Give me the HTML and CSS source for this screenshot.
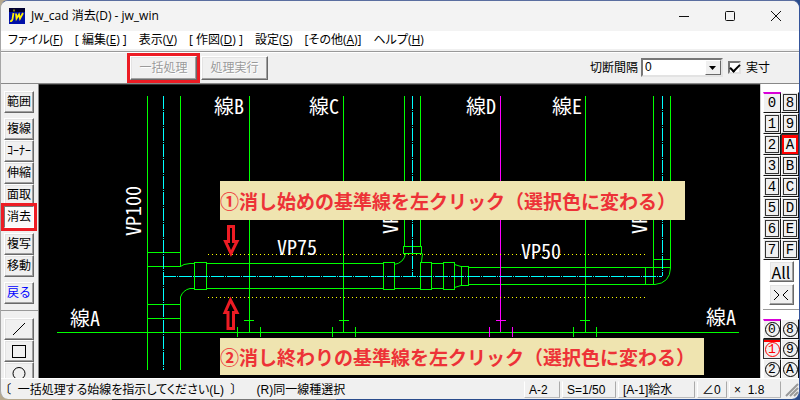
FILE: index.html
```html
<!DOCTYPE html>
<html lang="ja">
<head>
<meta charset="utf-8">
<title>Jw_cad 消去(D) - jw_win</title>
<link rel="stylesheet" href="styles.css">
</head>
<body>
<div class="window">
  <header class="titlebar">
    <svg class="app-icon" viewBox="0 0 16 16" aria-hidden="true">
      <rect width="16" height="16" fill="#0010a8"/>
      <rect width="16" height="4" fill="#000030"/>
      <path d="M4.500 2.500h1M4.500 5L3.500 11Q3 13.500 1 13M7 5.500L7.500 10.500L10 6.500L11 10.500L14 5" fill="none" stroke="#fff200" stroke-width="1.800"/>
    </svg>
    <h1>Jw_cad 消去(D) - jw_win</h1>
    <div class="window-controls">
      <button aria-label="最小化"><svg viewBox="0 0 12 12"><path d="M1 6.500h10"/></svg></button>
      <button aria-label="最大化"><svg viewBox="0 0 12 12"><rect x="1.500" y="1.500" width="9" height="9" rx="1"/></svg></button>
      <button aria-label="閉じる"><svg viewBox="0 0 12 12"><path d="M1 1l10 10M11 1L1 11"/></svg></button>
    </div>
  </header>

  <nav class="menu">
    <a href="#">ファイル(<u>F</u>)</a>
    <a href="#">[ 編集(<u>E</u>) ]</a>
    <a href="#">表示(<u>V</u>)</a>
    <a href="#">[ 作図(<u>D</u>) ]</a>
    <a href="#">設定(<u>S</u>)</a>
    <a href="#">[その他(<u>A</u>)]</a>
    <a href="#">ヘルプ(<u>H</u>)</a>
  </nav>

  <div class="control-bar">
    <button class="raised command marked" disabled>一括処理</button>
    <button class="raised command" disabled>処理実行</button>
    <div class="options">
      <label for="interval">切断間隔</label>
      <div class="combo">
        <select id="interval"><option>0</option></select>
        <span class="combo-arrow"><svg viewBox="0 0 7 4"><path d="M0 0h7L3.500 4z"/></svg></span>
      </div>
      <input type="checkbox" id="actual" checked>
      <label for="actual">実寸</label>
    </div>
  </div>

  <main class="workspace">
    <aside class="tools">
      <div class="tool-group"><button class="raised">範囲</button></div>
      <div class="tool-group">
        <button class="raised">複線</button>
        <button class="raised">ｺｰﾅｰ</button>
        <button class="raised">伸縮</button>
        <button class="raised">面取</button>
        <button class="raised pressed marked">消去</button>
      </div>
      <div class="tool-group">
        <button class="raised">複写</button>
        <button class="raised">移動</button>
      </div>
      <div class="tool-group"><button class="raised undo">戻る</button></div>
      <div class="tool-group shapes">
        <button class="raised" aria-label="線"><svg viewBox="0 0 16 14"><path d="M2 13L14 1"/></svg></button>
        <button class="raised" aria-label="矩形"><svg viewBox="0 0 16 14"><rect x="1.500" y="1.500" width="13" height="12"/></svg></button>
        <button class="raised" aria-label="円弧"><svg viewBox="0 0 16 14"><circle cx="8" cy="7.500" r="6"/></svg></button>
      </div>
    </aside>

    <section class="canvas">
      <svg class="drawing" viewBox="39 85 721 293" preserveAspectRatio="xMinYMin slice">
        <g class="solid">
          <path d="M147.500 96V370M180.500 96V266.500M180.500 297V370M147.500 252.500H180M147.500 266.500H180M147.500 304.500H180M147.500 318.500H180"/>
          <path d="M57 332.500H739"/>
          <path class="curve" d="M180.500 266.500L184 264.500L190 263.500H194M180.500 297Q183 290 190 288.500H194"/>
          <path d="M194.500 262.500h12v27h-12zM206 263.500H383M206 288.500H383M383.500 262.500h11v27h-11zM394 288.500H420"/>
          <path class="curve" d="M394 264.500Q404 263 405.500 253.500M422.500 253.500L421.500 262"/>
          <path d="M403.500 246.500h18v7h-18zM404.500 96V246M420.500 96V246"/>
          <path d="M420.500 262.500h11v27h-11zM431 263.500H443M431 288.500H443M443.500 262.500h11v27h-11zM461.500 266.500h7v19h-7z"/>
          <path class="curve" d="M454.500 264.500L461 266.500M454.500 287.500L461 285.500"/>
          <path d="M468 267.500H670M468 284.500H655M645.500 267V284M653.500 96V284M670.500 96V268M653.500 259.500H670"/>
          <path class="curve" d="M655 284.500Q670 283 670.500 268"/>
          <path d="M249.500 96V332M244 320.500h10M237.500 327v10M260.500 327v10"/>
          <path d="M343.500 96V332M339 320.500h10M332.500 327v10M355.500 327v10"/>
          <path d="M585.500 96V332M580 320.500h10M573.500 327v10M596.500 327v10"/>
        </g>
        <path class="selected" d="M500.500 96V332M496 320.500h10M489.500 327v10M512.500 327v10"/>
        <path class="center" d="M163.500 96V370M412.500 96V276M662.500 96V276M163 276.500H662"/>
        <path class="dotted" d="M208 254.500H645M208 297.500H647"/>
        <g class="cad-text">
          <text x="214" y="114">線B</text>
          <text x="309" y="114">線C</text>
          <text x="466" y="114">線D</text>
          <text x="552" y="114">線E</text>
          <text x="70" y="326">線A</text>
          <text x="706" y="325">線A</text>
          <text x="277" y="255">VP75</text>
          <text x="521" y="259">VP50</text>
          <text transform="translate(141 236) rotate(-90)">VP100</text>
          <text transform="translate(398 234) rotate(-90)">VP75</text>
          <text transform="translate(647 234) rotate(-90)">VP50</text>
        </g>
        <g class="arrows">
          <path d="M228.500 226.500h5v15h3.500L231 253.500L225.500 241.500h3z"/>
          <path d="M228 328.500h5.500v-16h3.500L230.500 300L225 312.500h3z"/>
        </g>
      </svg>
      <p class="note note-start">①消し始めの基準線を左クリック（選択色に変わる）</p>
      <p class="note note-end">②消し終わりの基準線を左クリック（選択色に変わる）</p>
    </section>

    <aside class="layers">
      <div class="layer-grid">
        <button class="used">0</button><button>8</button>
        <button>1</button><button>9</button>
        <button>2</button><button class="current">A</button>
        <button>3</button><button>B</button>
        <button>4</button><button>C</button>
        <button>5</button><button>D</button>
        <button>6</button><button>E</button>
        <button>7</button><button>F</button>
      </div>
      <div class="layer-actions">
        <button class="raised all">All</button>
        <button class="raised" aria-label="×"><svg viewBox="0 0 16 12"><path d="M1 1l5 5l-5 5M15 1l-5 5l5 5"/></svg></button>
      </div>
      <div class="layer-grid groups">
        <button class="used"><span>0</span></button><button><span>8</span></button>
        <button class="current"><span>1</span></button><button><span>9</span></button>
        <button><span>2</span></button><button><span>A</span></button>
      </div>
    </aside>
  </main>

  <footer class="status">
    <p>〔&nbsp; 一括処理する始線を指示してください(L)&nbsp; 〕&nbsp; &nbsp; &nbsp; (R)同一線種選択</p>
    <button class="cell paper">A-2</button>
    <button class="cell scale">S=1/50</button>
    <button class="cell layer">[A-1]給水</button>
    <button class="cell angle">∠0</button>
    <button class="cell zoom">×&nbsp; 1.8</button>
    <svg class="grip" viewBox="0 0 14 14" aria-hidden="true"><path d="M1 13L13 1M5 13L13 5M9 13L13 9"/></svg>
  </footer>
</div>
</body>
</html>
```

FILE: styles.css
```css
* { box-sizing: border-box; }

body {
  margin: 0;
  height: 100vh;
  overflow: hidden;
  background: linear-gradient(90deg, #b5a78c 14%, #2c2c2c 14% 25%, #777 25% 42%, #2a4c8c 42%);
  color: #000;
  font: 12px/16px "Liberation Sans", "Noto Sans CJK JP", sans-serif;
}

button, select, input { font: inherit; color: inherit; margin: 0; }
button { padding: 0; border: 0; background: none; }
p, h1 { margin: 0; }
svg { display: block; }

.window {
  display: flex;
  flex-direction: column;
  height: calc(100vh - 1px);
  border: 1px solid #a6a6a6;
  border-top-color: #5a6ea0;
  border-right-color: #34549a;
  border-bottom: 0;
  border-radius: 8px;
  background: #f0f0f0;
  overflow: hidden;
}

.titlebar {
  display: flex;
  align-items: center;
  flex: none;
  height: 30px;
  padding-left: 8px;
  gap: 6px;
  background: #f3f3f3;
}
.titlebar h1 { font: 12px/16px "Open Sans", "Noto Sans CJK JP", sans-serif; }
.app-icon { width: 16px; height: 16px; }
.window-controls { display: flex; margin-left: auto; }
.window-controls button { display: grid; place-items: center; width: 46px; height: 30px; }
.window-controls svg { width: 12px; height: 12px; fill: none; stroke: #111; }

.menu {
  display: flex;
  align-items: center;
  flex: none;
  height: 20px;
  gap: 12px;
  padding-left: 7px;
  background: #fff;
  border-bottom: 2px solid #f0f0f0;
  font-family: "Open Sans", "Noto Sans CJK JP", sans-serif;
  font-feature-settings: "palt";
}
.menu a { color: #000; text-decoration: none; white-space: nowrap; }

.control-bar {
  display: flex;
  align-items: center;
  flex: none;
  height: 33px;
  gap: 4px;
  padding-left: 129px;
  padding-right: 29px;
  border-top: 1px solid #999;
  border-bottom: 1px solid #888;
  box-shadow: inset 0 1px #fff;
}

.raised {
  background: #f0f0f0;
  border: 1px solid;
  border-color: #fff #696969 #696969 #fff;
  box-shadow: inset -1px -1px #a0a0a0, inset 1px 1px #e3e3e3;
}
.command { width: 67px; height: 24px; }
.command:disabled { color: #9a9a9a; text-shadow: 1px 1px #fff; }
.marked { outline: 3px solid #ed1c24; outline-offset: 0; position: relative; z-index: 1; }

.options { display: flex; align-items: center; gap: 3px; margin-left: auto; }
.combo { position: relative; width: 82px; height: 19px; }
.combo select {
  appearance: none;
  display: block;
  width: 100%;
  height: 100%;
  padding: 0 2px;
  line-height: 15px;
  background: #fff;
  border: 2px solid;
  border-color: #777 #e3e3e3 #e3e3e3 #777;
  border-radius: 0;
}
.combo-arrow {
  position: absolute;
  top: 2px;
  right: 2px;
  bottom: 2px;
  width: 16px;
  display: grid;
  place-items: center;
  background: #f0f0f0;
  border: 1px solid;
  border-color: #fff #696969 #696969 #fff;
  pointer-events: none;
}
.combo-arrow svg { width: 7px; height: 4px; }
.options input {
  appearance: none;
  width: 13px;
  height: 13px;
  margin: 0 2px;
  background: #fff;
  border: 2px solid;
  border-color: #777 #e3e3e3 #e3e3e3 #777;
  display: grid;
  place-items: center;
}
.options input:checked::before {
  content: "";
  width: 8px;
  height: 4px;
  border: solid #000;
  border-width: 0 0 2px 2px;
  transform: translateY(-1px) rotate(-45deg);
}

.workspace { display: flex; flex: 1; min-height: 0; }

.tools {
  flex: none;
  width: 38px;
  padding-top: 7px;
  overflow: hidden;
  border-right: 1px solid #888;
}
.tool-group { display: flex; flex-direction: column; padding: 0 4px 5px 3px; }
.tool-group button { flex: none; height: 22px; text-align: center; }
.pressed { background: #fafafa; border-color: #777 #fff #fff #777; box-shadow: none; }
.undo { color: #0000ff; }
.shapes { margin-top: 1px; padding-top: 7px; border-top: 1px solid #999; }
.shapes button { display: grid; place-items: center; }
.shapes svg { width: 16px; height: 14px; fill: none; stroke: #000; }

.canvas { position: relative; flex: 1; min-width: 0; background: #000; border-top: 1px solid #333; overflow: hidden; }
.drawing { width: 100%; height: 100%; fill: none; }
.solid, .selected, .center, .dotted { shape-rendering: crispEdges; }
.solid { stroke: #00ff00; }
.curve { shape-rendering: auto; }
.selected { stroke: #ff00ff; }
.center { stroke: #00ffff; stroke-dasharray: 13 1 1 1; }
.dotted { stroke: #ffff00; stroke-dasharray: 1 3; }
.cad-text { fill: #fff; font: 20px "Noto Sans CJK JP", sans-serif; font-feature-settings: "hwid"; }
.arrows { stroke: #ed1c24; stroke-width: 3; fill: #000; }

.note {
  position: absolute;
  left: 181px;
  padding-right: 9px;
  background: #efe4b0;
  color: #ed3237;
  font: bold 19px/39px "Noto Sans CJK JP", sans-serif;
  white-space: nowrap;
}
.note-start { top: 96px; }
.note-end { top: 253px; line-height: 37px; }

.layers {
  flex: none;
  display: flex;
  flex-direction: column;
  width: 39px;
  padding: 8px 0 0 2px;
  overflow: hidden;
  background: #fff;
  border-left: 1px solid #ccc;
}
.layer-grid { display: grid; grid-template-columns: 1fr 1fr; flex: none; }
.layer-grid button {
  height: 21px;
  padding: 1px;
  background: #f0f0f0;
  border: 1px solid;
  border-color: #fff #111 #111 #fff;
  font: 14px/14px "Liberation Mono", monospace;
}
.layer-grid:not(.groups) button { box-shadow: inset 0 0 0 1px #e8e8e8, inset 0 0 0 2px #333; }
.layer-grid .used:not(#x) { border-top: 2px solid #d800d8; box-shadow: none; }
.layer-grid:not(.groups) .current { border-color: #333; box-shadow: inset 0 0 0 2px #f00, inset 0 3px #f00; }
.layer-actions {
  display: flex;
  flex-direction: column;
  align-items: center;
  gap: 2px;
  padding: 1px 0 4px;
  border-bottom: 1px solid #999;
}
.layer-actions button { display: grid; place-items: center; width: 25px; height: 21px; }
.layer-actions svg { width: 16px; height: 12px; fill: none; stroke: #000; }
.all { font: 16px/18px "Noto Sans CJK JP", sans-serif; }
.groups { padding-top: 9px; }
.groups button { height: 20px; padding: 0; }
.groups span { display: block; width: 15px; height: 15px; margin: auto; border: 1px solid #000; border-radius: 50%; font-size: 13px; line-height: 14px; }
.groups .current { color: #f00; border: 1px solid #333; box-shadow: inset 0 2px #f00; }
.groups .current span { border-color: #f00; }

.status {
  display: flex;
  align-items: center;
  flex: none;
  height: 21px;
  gap: 2px;
  padding: 1px 0 0 4px;
  border-top: 1px solid #fff;
}
.status p { flex: 1; white-space: nowrap; font-feature-settings: "palt"; }
.cell {
  height: 17px;
  padding-left: 4px;
  border: 1px solid;
  border-color: #f0f0f0 #aaa #bbb #fff;
  text-align: left;
  white-space: nowrap;
}
.paper { width: 36px; }
.scale { width: 54px; }
.layer { width: 77px; }
.angle { width: 30px; }
.zoom { width: 52px; }
.grip { flex: none; width: 14px; height: 14px; margin-left: 2px; stroke: #999; stroke-width: 2; }
```
